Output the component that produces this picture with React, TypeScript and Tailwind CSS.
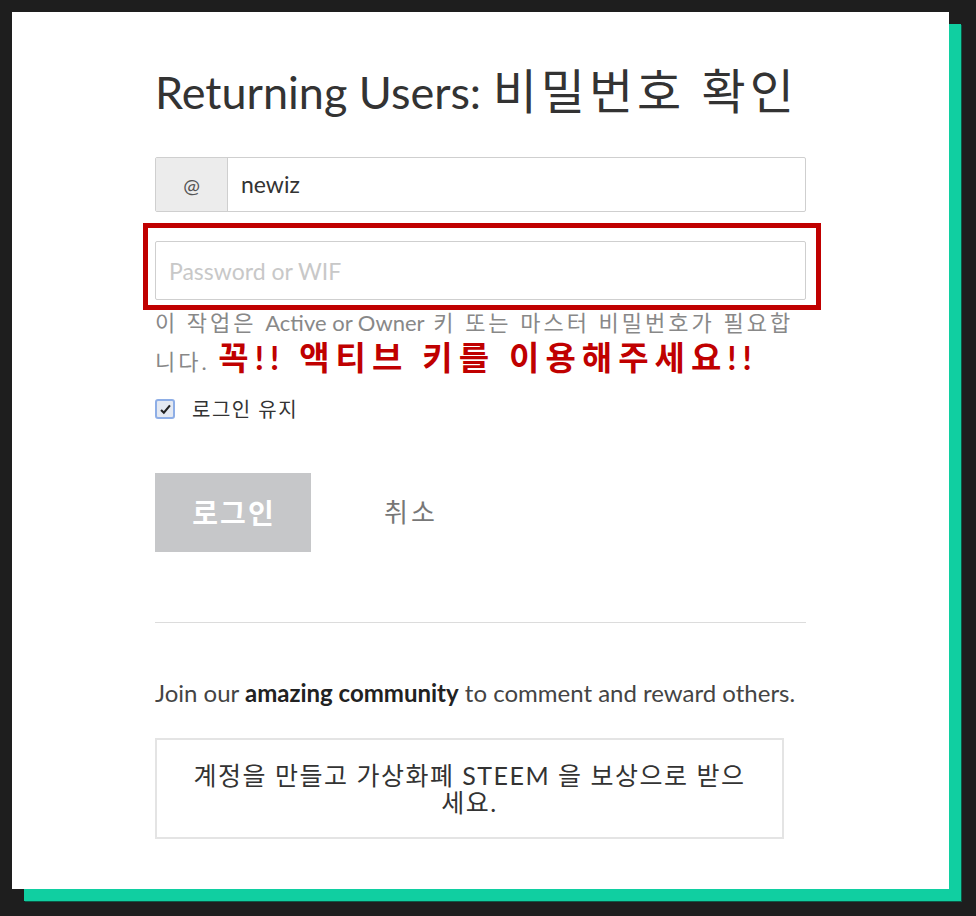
import { useState } from "react";

const latin = "font-['Lato','Noto_Sans_CJK_KR',sans-serif]";

const App = () => {
    const [remember, setRemember] = useState(true);
    const [password, setPassword] = useState("");

    return (
        <div className={`min-h-[916px] w-[976px] bg-[#1e1e1e] pl-3 pt-3 ${latin}`}>
            <div className="h-[877px] w-[937px] bg-white px-[143px] pt-[52px] shadow-[12px_12px_0_#10cfa1,13px_13px_0_#0b5a46]">
                <h1 className="text-[45px] leading-[54px] text-[#333] whitespace-nowrap">
                    Returning Users: <span className="text-[48px] tracking-[4px]">비밀번호 확인</span>
                </h1>

                {/* username */}
                <div className="mt-[38px] flex h-[55px] rounded-[2px] border border-[#cfcfcf]">
                    <span className="flex w-[72px] items-center justify-center border-r border-[#cfcfcf] bg-[#ececec] text-[20px] text-[#555]">
                        @
                    </span>
                    <input
                        className="flex-1 px-[13px] text-[23px] text-[#333] outline-none"
                        defaultValue="newiz"
                    />
                </div>

                {/* password, with the red highlight box over it */}
                <div className="relative mt-[29px]">
                    <input
                        type="password"
                        value={password}
                        onChange={(e) => setPassword(e.target.value)}
                        placeholder="Password or WIF"
                        className="h-[59px] w-full rounded-[2px] border border-[#cfcfcf] px-[13px] text-[23px] text-[#333] outline-none placeholder:text-[#c8c8c8]"
                    />
                    <div className="pointer-events-none absolute -top-[18px] -left-[12px] -right-[15px] -bottom-[10px] border-[5px] border-[#c00000]" />
                </div>

                <p className="mt-[6px] text-[22px] leading-[34px] tracking-[3px] text-[#888]">
                    이 작업은 <span className="tracking-normal">Active or Owner</span> 키 또는 마스터 비밀번호가 필요합니다.{" "}
                    <span className="text-[33px] font-bold leading-[34px] tracking-[6px] text-[#c00000]">
                        꼭!! 액티브 키를 이용해주세요!!
                    </span>
                </p>

                <label className="mt-[20px] flex items-center gap-[17px] text-[20px] leading-[20px] tracking-[1.5px] text-[#333]">
                    <input
                        type="checkbox"
                        checked={remember}
                        onChange={() => setRemember(!remember)}
                        className="sr-only"
                    />
                    <span className="flex h-[20px] w-[20px] items-center justify-center rounded-[3px] border-2 border-[#8eaee6] bg-[#e4e9f2]">
                        {remember && (
                            <svg viewBox="0 0 16 16" className="h-[13px] w-[13px]">
                                <path d="M2.5 8.5 6 12l7.5-9" fill="none" stroke="#222" strokeWidth="2.6" />
                            </svg>
                        )}
                    </span>
                    로그인 유지
                </label>

                <div className="mt-[54px] flex items-center">
                    <button className="h-[79px] w-[156px] bg-[#c6c7c9] pl-[2px] text-[28px] font-bold tracking-[2px] text-white">
                        로그인
                    </button>
                    <button className="ml-[73px] text-[26px] tracking-[3px] text-[#777]">취소</button>
                </div>

                <hr className="mt-[70px] border-t border-[#dcdcdc]" />

                <p className="mt-[55px] text-[24px] leading-[30px] text-[#444]">
                    Join our <b className="text-[#222]">amazing community</b> to comment and reward others.
                </p>

                <div className="mt-[30px] w-[629px] border-2 border-[#e4e4e4] px-[32px] pt-[22px] pb-[21px] text-center text-[25px] leading-[27px] tracking-[1.5px] text-[#333]">
                    계정을 만들고 가상화폐 STEEM 을 보상으로 받으세요.
                </div>
            </div>
        </div>
    );
};

export default App;
